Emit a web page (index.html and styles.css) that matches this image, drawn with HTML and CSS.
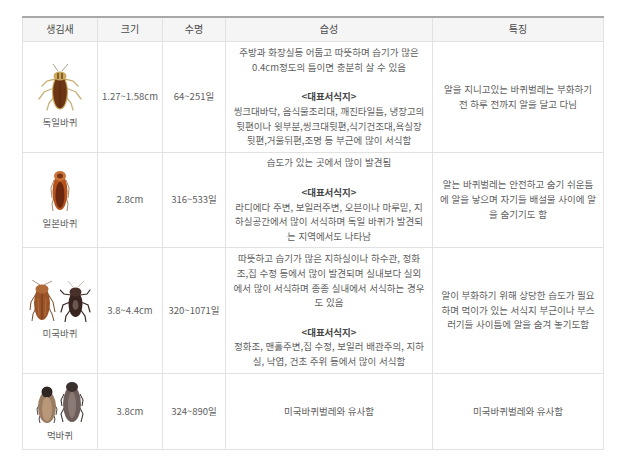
FILE: index.html
```html
<!DOCTYPE html>
<html lang="ko">
<head>
<meta charset="utf-8">
<link rel="stylesheet" href="styles.css">
</head>
<body>
<div class="wrap">
<table class="tbl">
<colgroup>
<col class="c1"><col class="c2"><col class="c3"><col class="c4"><col class="c5">
</colgroup>
<thead>
<tr class="hr"><th>생김새</th><th>크기</th><th>수명</th><th>습성</th><th>특징</th></tr>
</thead>
<tbody>
<tr class="r1">
<td>
<div class="pic">
<svg width="44" height="47" viewBox="0 0 44 47">
<g stroke="#8a7a50" stroke-width="0.7" fill="none">
<path d="M20 7 L15 0"/><path d="M24 7 L30 0"/>
</g>
<g stroke="#c8b27a" stroke-width="1.3" fill="none" stroke-linecap="round">
<path d="M17 15 L9 17 L4 22"/><path d="M27 15 L35 17 L40 22"/>
<path d="M16 24 L6 28 L1 35"/><path d="M28 24 L38 28 L43 35"/>
<path d="M17 32 L11 39 L9 46"/><path d="M27 32 L33 39 L35 46"/>
</g>
<ellipse cx="22" cy="28" rx="7.5" ry="17" fill="#6b3414" stroke="#c9a860" stroke-width="1.2"/>
<ellipse cx="22" cy="12" rx="6.5" ry="4.5" fill="#caa85e"/>
<path d="M20 9 L20 15 M24 9 L24 15" stroke="#5a3010" stroke-width="1.2"/>
<path d="M22 17 L22 44" stroke="#4a220c" stroke-width="0.6"/>
</svg>
</div>
<div class="nm">독일바퀴</div>
</td>
<td>1.27~1.58cm</td>
<td>64~251일</td>
<td class="txt">주방과 화장실등 어둡고 따뜻하며 습기가 많은<br>0.4cm정도의 틈이면 충분히 살 수 있음<br><br><b>&lt;대표서식지&gt;</b><br>씽크대바닥, 음식물조리대, 깨진타일틈, 냉장고의<br>뒷편이나 윗부분,씽크대뒷편,식기건조대,욕실장<br>뒷편,거울뒤편,조명 등 부근에 많이 서식함</td>
<td class="txt">알을 지니고있는 바퀴벌레는 부화하기<br>전 하루 전까지 알을 달고 다님</td>
</tr>
<tr class="r2">
<td>
<div class="pic">
<svg width="20" height="44" viewBox="0 0 20 44">
<g stroke="#9a6a45" stroke-width="0.8" fill="none">
<path d="M4 12 L1 20 L2 30"/><path d="M16 12 L19 20 L18 30"/>
<path d="M4 28 L2 36 L3 43"/><path d="M16 28 L18 36 L17 43"/>
</g>
<ellipse cx="10" cy="24" rx="7.5" ry="18" fill="#b4541c"/>
<ellipse cx="10" cy="8" rx="6" ry="5" fill="#c8743a"/>
<ellipse cx="10" cy="8" rx="3" ry="2.5" fill="#7a3515"/>
<ellipse cx="10" cy="27" rx="4.5" ry="13" fill="#6a2810"/>
</svg>
</div>
<div class="nm">일본바퀴</div>
</td>
<td>2.8cm</td>
<td>316~533일</td>
<td class="txt">습도가 있는 곳에서 많이 발견됨<br><br><b>&lt;대표서식지&gt;</b><br>라디에다 주변, 보일러주변, 오븐이나 마루밑, 지<br>하실공간에서 많이 서식하며 독일 바퀴가 발견되<br>는 지역에서도 나타남</td>
<td class="txt">알는 바퀴벌레는 안전하고 숨기 쉬운틈<br>에 알을 낳으며 자기들 배설물 사이에 알<br>을 숨기기도 함</td>
</tr>
<tr class="r3">
<td>
<div class="pic pair">
<svg width="27" height="42" viewBox="0 0 27 42">
<g stroke="#8a6a50" stroke-width="0.7" fill="none">
<path d="M11 5 L3 0"/><path d="M15 5 L23 1"/>
</g>
<g stroke="#7a4a2a" stroke-width="1" fill="none">
<path d="M7 14 L2 22 L1 30"/><path d="M19 14 L24 22 L26 32"/>
<path d="M8 26 L4 34 L3 41"/><path d="M19 26 L23 34 L25 41"/>
</g>
<ellipse cx="13" cy="23" rx="8" ry="17" fill="#9a5428"/>
<ellipse cx="13" cy="9" rx="6.5" ry="4.5" fill="#b06a38"/>
<path d="M13 14 L13 39" stroke="#6a3015" stroke-width="0.8"/>
<path d="M9 18 L10 36 M17 18 L16 36" stroke="#c08050" stroke-width="0.6"/>
</svg>
<svg width="31" height="41" viewBox="0 0 31 41">
<g stroke="#9a8a80" stroke-width="0.6" fill="none">
<path d="M13 6 L8 0"/><path d="M18 6 L24 0"/>
</g>
<g stroke="#3a2825" stroke-width="1.2" fill="none" stroke-linecap="round">
<path d="M11 14 L4 13 L0 9"/><path d="M20 14 L27 13 L30 9"/>
<path d="M10 21 L3 24 L1 31"/><path d="M21 21 L28 24 L30 31"/>
<path d="M11 28 L6 35 L5 41"/><path d="M20 28 L25 35 L26 41"/>
</g>
<ellipse cx="15.5" cy="23" rx="7" ry="13" fill="#3a2420"/>
<ellipse cx="15.5" cy="11" rx="6" ry="4.5" fill="#4a302a"/>
<ellipse cx="15.5" cy="24" rx="3" ry="5" fill="#6a5550"/>
</svg>
</div>
<div class="nm">미국바퀴</div>
</td>
<td>3.8~4.4cm</td>
<td>320~1071일</td>
<td class="txt">따뜻하고 습기가 많은 지하실이나 하수관, 정화<br>조,집 수정 등에서 많이 발견되며 실내보다 실외<br>에서 많이 서식하며 종종 실내에서 서식하는 경우<br>도 있음<br><br><b>&lt;대표서식지&gt;</b><br>정화조, 맨홀주변,집 수정, 보일러 배관주의, 지하<br>실, 낙엽, 건초 주위 등에서 많이 서식함</td>
<td class="txt">알이 부화하기 위해 상당한 습도가 필요<br>하며 먹이가 있는 서식지 부근이나 부스<br>러기들 사이틈에 알을 숨겨 놓기도함</td>
</tr>
<tr class="r4">
<td>
<div class="pic pair2">
<svg width="22" height="41" viewBox="0 0 22 41">
<g stroke="#3a302a" stroke-width="0.9" fill="none">
<path d="M4 20 L1 26 L2 32"/><path d="M18 20 L21 26 L20 32"/>
<path d="M5 30 L3 36 L4 40"/><path d="M17 30 L19 36 L18 40"/>
</g>
<ellipse cx="11" cy="24" rx="9" ry="16" fill="#9a7c62"/>
<ellipse cx="11" cy="9" rx="5.5" ry="5.5" fill="#2e2622"/>
<ellipse cx="11" cy="26" rx="5" ry="12" fill="#b89878"/>
</svg>
<svg width="24" height="44" viewBox="0 0 24 44">
<g stroke="#2a2220" stroke-width="1" fill="none">
<path d="M4 14 L1 20 L2 26"/><path d="M20 14 L23 20 L22 26"/>
<path d="M4 28 L1 34 L3 42"/><path d="M20 28 L23 34 L21 42"/>
</g>
<ellipse cx="12" cy="24" rx="9" ry="18" fill="#6e5e5a"/>
<ellipse cx="12" cy="7" rx="6" ry="5" fill="#3a302e"/>
<ellipse cx="12" cy="25" rx="4" ry="13" fill="#8a7a76"/>
</svg>
</div>
<div class="nm">먹바퀴</div>
</td>
<td>3.8cm</td>
<td>324~890일</td>
<td>미국바퀴벌레와 유사함</td>
<td>미국바퀴벌레와 유사함</td>
</tr>
</tbody>
</table>
</div>
</body>
</html>
```
FILE: styles.css
```css
html, body {
  margin: 0;
  padding: 0;
  background: #ffffff;
}
.wrap {
  padding: 16px 0 0 22px;
}
.tbl {
  border-collapse: collapse;
  width: 581px;
  table-layout: fixed;
  font-family: "Noto Sans CJK KR", "Noto Sans", sans-serif;
  font-size: 9.5px;
  color: #5e5e5e;
  border-top: 2px solid #a8a8a8;
}
.c1 { width: 75px; }
.c2 { width: 65px; }
.c3 { width: 63px; }
.c4 { width: 207px; }
.c5 { width: 171px; }
.tbl th, .tbl td {
  border: 1px solid #e2e2e2;
  text-align: center;
  vertical-align: middle;
  padding: 0 2px;
  line-height: 14.7px;
}
.tbl th {
  background: #f5f5f5;
  font-weight: normal;
  color: #4a4a4a;
  font-size: 10px;
  border-top: 2px solid #a8a8a8;
}
.hr { height: 24px; }
.r1 { height: 111px; }
.r2 { height: 95px; }
.r3 { height: 126px; }
.r4 { height: 76px; }
.txt {
  white-space: nowrap;
}
.txt b {
  color: #444;
  font-weight: bold;
}
.pic {
  display: flex;
  justify-content: center;
  align-items: flex-end;
  gap: 4px;
}
.pic svg {
  display: block;
}
.nm {
  margin-top: 4px;
}
.pair2 { gap: 2px; }
```
